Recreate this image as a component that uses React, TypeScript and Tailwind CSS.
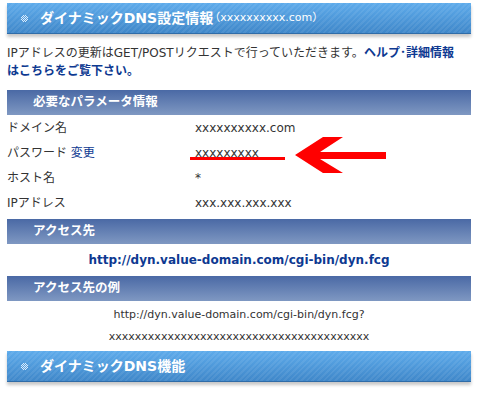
import React from "react";

const font = { fontFamily: '"DejaVu Sans", "Noto Sans CJK JP", sans-serif' };

function DotIcon() {
  const dots: [number, number][] = [];
  for (let y = 0; y < 7; y++) {
    for (let x = 0; x < 7; x++) {
      if ((x + y) % 2 === 0 && Math.abs(x - 3) + Math.abs(y - 3) <= 4) dots.push([x, y]);
    }
  }
  return (
    <svg width="7" height="7" viewBox="0 0 7 7" className="shrink-0">
      {dots.map(([x, y], i) => (
        <rect key={i} x={x} y={y} width="1" height="1" fill="#dcecfb" />
      ))}
    </svg>
  );
}

function MainHeader({ children }: { children: React.ReactNode }) {
  return (
    <div className="h-[31px] flex items-center pl-[14px] gap-[12px] text-white border-b border-[#2f6ca8] shadow-[0_3px_3px_rgba(0,0,0,0.22)] bg-[image:repeating-linear-gradient(135deg,rgba(255,255,255,0.07)_0px,rgba(255,255,255,0.07)_2px,transparent_2px,transparent_4px),linear-gradient(#5eabeb,#3f87c9)]">
      <DotIcon />
      {children}
    </div>
  );
}

function SubHeader({ children }: { children: React.ReactNode }) {
  return (
    <div className="h-[25px] flex items-center pl-[26px] text-white font-bold text-[12.5px] bg-[linear-gradient(#4a69a5,#7f98c2)]">
      {children}
    </div>
  );
}

function Row({ label, value, children }: { label: React.ReactNode; value: string; children?: React.ReactNode }) {
  return (
    <div className="relative h-[25px] flex items-center text-[12px] text-[#333]">
      <div className="w-[188px]">{label}</div>
      <div>{value}</div>
      {children}
    </div>
  );
}

export default function App() {
  return (
    <div className="w-[478px] h-[396px] bg-white overflow-hidden" style={font}>
      <div className="mx-[7px] pt-[3px]">
        <MainHeader>
          <span className="text-[14px] font-bold">ダイナミックDNS設定情報</span>
          <span className="text-[11px] -ml-[16px]">（xxxxxxxxxx.com）</span>
        </MainHeader>
        <p className="mt-[10px] text-[12px] leading-[18px] text-[#333] whitespace-nowrap">
          IPアドレスの更新はGET/POSTリクエストで行っていただきます。
          <span className="font-bold text-[#0d3991]">
            ヘルプ･詳細情報
            <br />
            はこちらをご覧下さい。
          </span>
        </p>
        <div className="mt-[10px]">
          <SubHeader>必要なパラメータ情報</SubHeader>
          <Row label="ドメイン名" value="xxxxxxxxxx.com" />
          <Row
            label={
              <span>
                パスワード <span className="text-[#0d3991]">変更</span>
              </span>
            }
            value="xxxxxxxxx"
          >
            <div className="absolute left-[183px] top-[17px] w-[95px] h-[3px] bg-[#ff0000]" />
            <svg className="absolute left-[288px] top-[-3px]" width="92" height="37" viewBox="295 134 92 37">
              <polygon
                points="295,152 323,134 343,134 320,149 386,149 386,156 320,156 343,170 323,170"
                fill="#ff0000"
              />
            </svg>
          </Row>
          <Row label="ホスト名" value="*" />
          <Row label="IPアドレス" value="xxx.xxx.xxx.xxx" />
        </div>
        <div className="mt-[4px]">
          <SubHeader>アクセス先</SubHeader>
          <div className="h-[32px] flex items-center justify-center text-[12px] font-bold text-[#0d3991]">
            http://dyn.value-domain.com/cgi-bin/dyn.fcg
          </div>
          <SubHeader>アクセス先の例</SubHeader>
          <div className="pt-[3px] text-center text-[11px] leading-[22px] text-[#333]">
            <div>http://dyn.value-domain.com/cgi-bin/dyn.fcg?</div>
            <div>xxxxxxxxxxxxxxxxxxxxxxxxxxxxxxxxxxxxxxxx</div>
          </div>
        </div>
        <div className="mt-[3px]">
          <MainHeader>
            <span className="text-[14px] font-bold">ダイナミックDNS機能</span>
          </MainHeader>
        </div>
      </div>
    </div>
  );
}
